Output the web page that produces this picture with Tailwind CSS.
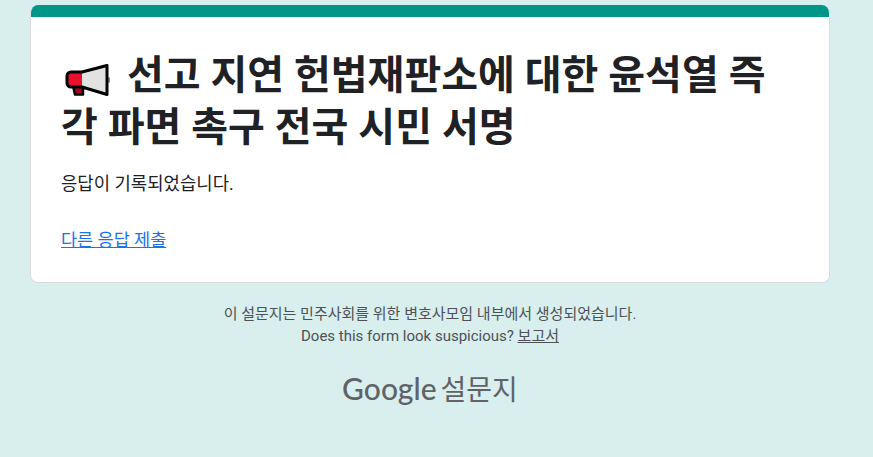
<!DOCTYPE html>
<html lang="ko">
<head>
<meta charset="utf-8">
<script src="https://cdn.jsdelivr.net/npm/@tailwindcss/browser@4"></script>
</head>
<body class="h-[457px] overflow-hidden bg-[#d9efed] font-['Roboto','Noto_Sans_CJK_KR',sans-serif] text-[#202124]">
<main class="ml-[30px] flex w-[800px] flex-col pt-[5px]">
  <section class="h-[278px] overflow-hidden rounded-[8px] border border-t-0 border-[#dadce0] bg-white">
    <div class="-mx-px h-[12px] bg-[#009688]"></div>
    <div class="px-[30px] pt-[33px]">
      <h1 class="text-[40px] font-bold leading-[52px]">
        <svg class="ml-[4px] mr-[6px] inline-block h-[32px] w-[46px] align-[-7px]" viewBox="0 0 46 32" aria-hidden="true">
          <path d="M42 13.500h3v5h-3z" fill="#8a8a8a"/>
          <path d="M8 22h10v8.500h-8z" fill="#a8001c" stroke="#000" stroke-width="2.500" stroke-linejoin="round"/>
          <path d="M6 8h11v15H6a4 4 0 0 1-4-4v-7a4 4 0 0 1 4-4z" fill="#e8112d"/>
          <path d="M17 8 42 1.500v29L17 23z" fill="#e2e2e2"/>
          <path d="M6 8h11L42 1.500v29L17 23H6a4 4 0 0 1-4-4v-7a4 4 0 0 1 4-4z" fill="none" stroke="#000" stroke-width="3" stroke-linejoin="round"/>
        </svg> 선고 지연 헌법재판소에 대한 윤석열 즉각 파면 촉구 전국 시민 서명
      </h1>
      <p class="mt-[17px] text-[17.8px] leading-[26px]">응답이 기록되었습니다.</p>
      <a href="#" class="mt-[30px] block w-fit text-[17.5px] leading-[26px] text-[#1a73e8] underline">다른 응답 제출</a>
    </div>
  </section>
  <footer class="flex flex-col items-center pt-[20px] text-center text-[15px] leading-[22px] text-[#4d5156]">
    <p>이 설문지는 민주사회를 위한 변호사모임 내부에서 생성되었습니다.</p>
    <p>Does this form look suspicious? <a href="#" class="underline">보고서</a></p>
    <div class="mt-[22px] flex items-baseline gap-[4px] text-[#5f6368]">
      <span class="font-['Lato'] text-[30px] font-medium leading-[38px]">Google</span>
      <span class="text-[28px] leading-[38px]">설문지</span>
    </div>
  </footer>
</main>
</body>
</html>
